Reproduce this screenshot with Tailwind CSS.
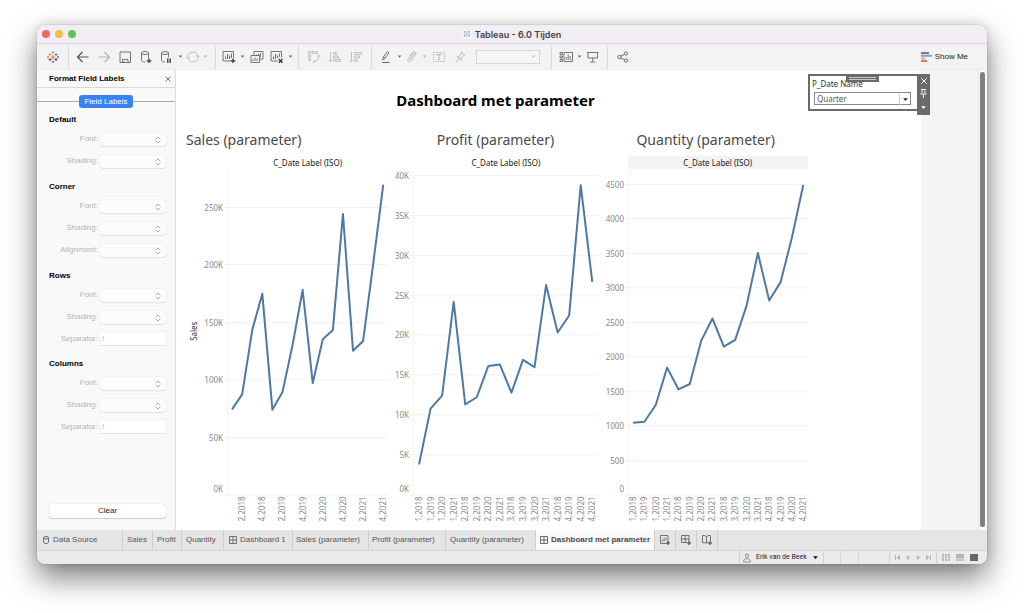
<!DOCTYPE html>
<html lang="en">
<head>
<meta charset="utf-8">
<meta name="viewport" content="width=device-width, initial-scale=1">
<title>Tableau - 6.0 Tijden</title>
<script src="https://cdn.jsdelivr.net/npm/@tailwindcss/browser@4"></script>
</head>
<body class="bg-white">

<!-- Shared icons -->
<svg class="hidden" aria-hidden="true">
  <symbol id="i-caret" viewBox="0 0 7 7"><path d="M1.700 2.500h3.600L3.500 4.700z" fill="currentColor"/></symbol>
  <symbol id="i-updown" viewBox="0 0 6 8"><path d="M1 3l2-2 2 2M1 5l2 2 2-2" fill="none" stroke="currentColor" stroke-width=".9" stroke-linecap="round" stroke-linejoin="round"/></symbol>
  <symbol id="i-grid" viewBox="0 0 8 8"><path d="M.5 .5h7v7h-7zM4 .5v7M.5 4h7" fill="none" stroke="currentColor" stroke-width=".8"/></symbol>
  <symbol id="i-logo" viewBox="0 0 14 14" fill="none" stroke-width=".9">
    <path d="M7 5v4M5 7h4" stroke="#e8762d" stroke-width="1.1"/>
    <path d="M4 3v3M2.500 4.500h3" stroke="#eb912c"/>
    <path d="M10 3v3M8.500 4.500h3" stroke="#59879b"/>
    <path d="M4 8v3M2.500 9.500h3" stroke="#c72035"/>
    <path d="M10 8v3M8.500 9.500h3" stroke="#1f447e"/>
    <path d="M7 1v2.500M5.800 2.200h2.400" stroke="#7199a6"/>
    <path d="M7 10.500V13M5.800 11.800h2.400" stroke="#5b6591"/>
    <path d="M2 5.900v2.200M1 7h2" stroke="#7199a6"/>
    <path d="M12 5.900v2.200M11 7h2" stroke="#5b6591"/>
  </symbol>
</svg>

<div class="flex min-h-screen flex-col pt-[25px] pr-[37px] pb-[49px] pl-[37px]">
<div class="flex flex-1 flex-col overflow-hidden rounded-lg bg-[#f4f4f4] font-['Liberation_Sans',Arial,sans-serif] text-[8px] leading-none text-[#3c3c3c] shadow-[0_0_1px_rgba(0,0,0,0.5),0_0_12px_rgba(0,0,0,0.12),0_14px_30px_rgba(0,0,0,0.5)]">

  <!-- Title bar -->
  <header class="grid h-[19px] shrink-0 grid-cols-[1fr_auto_1fr] items-center border-b border-[#dcd6dc] bg-[#f3edf5] px-[5px]">
    <div class="flex gap-[5px]">
      <button aria-label="Close" class="size-2 rounded-full bg-[#ed6a5e]"></button>
      <button aria-label="Minimize" class="size-2 rounded-full bg-[#f5bd4f]"></button>
      <button aria-label="Zoom" class="size-2 rounded-full bg-[#61c454]"></button>
    </div>
    <h1 class="flex items-center gap-1 font-[Inter,sans-serif] text-[9px] font-semibold text-[#444]">
      <svg class="size-2" viewBox="0 0 8 8"><path fill="#fff" d="M0 0h8v8H0z"/><path d="M4 .5v7M.5 4h7M1.800 1v2M6.200 1v2M1.800 5v2M6.200 5v2M1 2h1.600M5.400 2H7M1 6h1.600M5.400 6H7" stroke="#6f93bd" stroke-width=".8" stroke-dasharray="1.600 .5"/></svg>
      Tableau - 6.0 Tijden
    </h1>
    <span></span>
  </header>

  <!-- Toolbar -->
  <div role="toolbar" aria-label="Main" class="flex h-[26px] shrink-0 items-center border-b border-[#ebebeb] bg-[#f4f3f4] text-[#686868]">
    <div class="flex h-6 w-8 shrink-0 items-center justify-center border-r border-[#dcdcdc]">
      <button aria-label="Start page"><svg class="size-3.5"><use href="#i-logo"/></svg></button>
    </div>
    <div class="flex h-6 shrink-0 items-center border-r border-[#dcdcdc] pr-1 pl-[3px]">
      <button aria-label="Undo" class="flex w-[21px] justify-center"><svg class="size-3.5" viewBox="0 0 14 14" fill="none" stroke="#555" stroke-width="1.200"><path d="M12.500 7H1.500M6.500 2L1.500 7l5 5"/></svg></button>
      <button aria-label="Redo" class="flex w-[21px] justify-center text-[#b4b4b4]"><svg class="size-3.5" viewBox="0 0 14 14" fill="none" stroke="currentColor" stroke-width="1.200"><path d="M1.500 7h11M7.500 2l5 5-5 5"/></svg></button>
      <button aria-label="Save" class="flex w-[21px] justify-center"><svg class="size-3.5" viewBox="0 0 14 14" fill="none" stroke="currentColor" stroke-width=".9"><path d="M2 2h10.500v10.500H2zM4.500 12.500V9.500h5.500v3M6 12.500v-1.500"/></svg></button>
      <button aria-label="New data source" class="flex w-[21px] justify-center"><svg class="size-3.5" viewBox="0 0 14 14" fill="none" stroke="currentColor" stroke-width=".9"><ellipse cx="6" cy="3" rx="3.500" ry="1.500"/><path d="M2.500 3v7.500c0 .9 1.500 1.500 3.500 1.500M9.500 3v5"/><path d="M10 8.500v4.500M7.700 10.800h4.600" stroke="#333" stroke-width="1.300"/></svg></button>
      <button aria-label="Pause auto updates" class="flex w-[21px] justify-center"><svg class="size-3.5" viewBox="0 0 14 14" fill="none" stroke="currentColor" stroke-width=".9"><ellipse cx="5" cy="3" rx="3.500" ry="1.500"/><path d="M1.500 3v7.500c0 .9 1.500 1.500 3.500 1.500M8.500 3v4.500"/><path d="M7.800 8.500V13M10.200 8.500V13" stroke="#333" stroke-width="1.300"/></svg></button>
      <button aria-label="Pause options" class="w-[7px]"><svg class="size-[7px]"><use href="#i-caret"/></svg></button>
      <button aria-label="Run update" class="flex w-[18px] justify-center text-[#bcbcbc]"><svg class="size-3.5" viewBox="0 0 14 14" fill="none" stroke="currentColor" stroke-width="1"><path d="M2.200 8.500A5 5 0 0 1 11.300 4.500M11.800 5.500A5 5 0 0 1 2.700 9.500M1 7.300l1.300 1.500L4 7.500M10 6.500l1.800-1.300 1.200 1.600"/></svg></button>
      <button aria-label="Update options" class="mr-0.5 w-[7px] text-[#b0b0b0]"><svg class="size-[7px]"><use href="#i-caret"/></svg></button>
    </div>
    <div class="flex h-6 shrink-0 items-center border-r border-[#dcdcdc] pr-1 pl-[3px]">
      <button aria-label="New worksheet" class="flex w-5 justify-center"><svg class="size-3.5" viewBox="0 0 14 14" fill="none" stroke="currentColor" stroke-width=".9"><path d="M9 11H1V1.500h10.500V8"/><path d="M3.500 9V6.500M5.500 9V4M7.500 9V5.500M9.400 8V3.500" stroke-width="1"/><path d="M11 8.500V13M8.700 10.800h4.600" stroke="#333" stroke-width="1.300"/></svg></button>
      <button aria-label="New worksheet options" class="w-[7px]"><svg class="size-[7px]"><use href="#i-caret"/></svg></button>
      <button aria-label="Duplicate" class="flex w-[21px] justify-center"><svg class="size-3.5" viewBox="0 0 14 14" fill="none" stroke="currentColor" stroke-width=".9"><path d="M4 5V1.500h9v7.500H10M6.500 6V4.500M8.500 6V3.500M10.500 7V3"/><path d="M1 12.500V5.500h8.500v7zM3 11V9M5 11V7.500M7 11V8.500"/></svg></button>
      <button aria-label="Clear sheet" class="flex w-5 justify-center"><svg class="size-3.5" viewBox="0 0 14 14" fill="none" stroke="currentColor" stroke-width=".9"><path d="M8 11H1V1.500h10.500V7.500"/><path d="M3.500 9V6.500M5.500 9V4M7.500 8V5.500M9.400 7V3.500" stroke-width="1"/><path d="M8.800 9l3.700 3.700M12.500 9L8.800 12.700" stroke="#333" stroke-width="1.300"/></svg></button>
      <button aria-label="Clear options" class="w-[7px]"><svg class="size-[7px]"><use href="#i-caret"/></svg></button>
    </div>
    <div class="flex h-6 shrink-0 items-center border-r border-[#dcdcdc] pr-[5px] pl-1 text-[#b4b4b4]">
      <button aria-label="Swap rows and columns" class="flex w-[21px] justify-center"><svg class="size-3.5" viewBox="0 0 14 14" fill="none" stroke="currentColor" stroke-width=".8"><path d="M1.500 1.500h2v2h-2zM5 1.500h2v2H5zM8.500 1.500h2v2h-2zM1.500 5h2v2h-2zM1.500 8.500h2v2h-2z"/><path d="M11.500 5.500c.8 4-1.500 6-5 6M10 6.700l1.500-1.700 1.500 1.700M8 9.800l-1.700 1.700L8 13"/></svg></button>
      <button aria-label="Sort ascending" class="flex w-[21px] justify-center"><svg class="size-3.5" viewBox="0 0 14 14" fill="none" stroke="currentColor" stroke-width=".8"><path d="M2.500 2v9.500M1 10l1.500 1.700L4 10M5.500 2.500h3v1.800h-3zM5.500 6h5v1.800h-5zM5.500 9.500h7v1.800h-7z"/></svg></button>
      <button aria-label="Sort descending" class="flex w-[21px] justify-center"><svg class="size-3.5" viewBox="0 0 14 14" fill="none" stroke="currentColor" stroke-width=".8"><path d="M2.500 2v9.500M1 10l1.500 1.700L4 10M5.500 2.500h7v1.800h-7zM5.500 6h5v1.800h-5zM5.500 9.500h2.500v1.800H5.500z"/></svg></button>
    </div>
    <div class="flex h-6 shrink-0 items-center border-r border-[#dcdcdc] pr-[11px] pl-1 text-[#b4b4b4]">
      <button aria-label="Highlight" class="flex w-5 justify-center text-[#666]"><svg class="size-3.5" viewBox="0 0 14 14" fill="none" stroke="currentColor" stroke-width=".9"><path d="M3.500 10l.8-2.800 4-5.700 1.700 1.200-4 5.700zM4.300 7.200l1.700 1.200"/><path d="M3 12.500h7.500" stroke-width="1.200"/></svg></button>
      <button aria-label="Highlight options" class="w-[7px] text-[#666]"><svg class="size-[7px]"><use href="#i-caret"/></svg></button>
      <button aria-label="Group members" class="flex w-[18px] justify-center"><svg class="size-3.5" viewBox="0 0 14 14" fill="none" stroke="currentColor" stroke-width=".9"><path d="M5 9.500l4-5.200c.7-1-.5-2-1.300-1L3.300 9c-1.300 1.900 1 3.600 2.500 1.800l4.700-6.200c1.500-2.200-1.300-4.300-3-2.200L4.500 6.300"/></svg></button>
      <button aria-label="Group options" class="w-[7px]"><svg class="size-[7px]"><use href="#i-caret"/></svg></button>
      <button aria-label="Show mark labels" class="flex w-[21px] justify-center"><svg class="size-3.5" viewBox="0 0 14 14" fill="none" stroke="currentColor" stroke-width=".9"><path d="M1.500 2.500h11v9h-11z" stroke-dasharray="1.500 .8"/><path d="M4.500 5.500v-1h5v1M7 4.500v5M6 9.500h2"/></svg></button>
      <button aria-label="Fix axes" class="flex w-[21px] justify-center"><svg class="size-3.5" viewBox="0 0 14 14" fill="none" stroke="currentColor" stroke-width=".9"><path d="M8 2l3.700 3.200-1.300.4-2.200 2.400.3 2L4 6.300l2 .1 2.200-2.900zM6 8.200L2.800 12"/></svg></button>
      <select aria-label="Fit" disabled class="ml-1.5 h-[14px] w-16 appearance-none border border-[#d6d6d6] bg-[#f6f6f6] opacity-100"></select>
      <svg class="mr-[3px] -ml-2.5 size-[7px] text-[#c4c4c4]"><use href="#i-caret"/></svg>
    </div>
    <div class="flex h-6 shrink-0 items-center border-r border-[#dcdcdc] pr-1 pl-1">
      <button aria-label="Show or hide cards" class="flex w-5 justify-center"><svg class="size-3.5" viewBox="0 0 14 14" fill="none" stroke="currentColor" stroke-width=".9"><path d="M1 2.500h2.500v2H1zM1 6h2.500v2H1zM1 9.500h2.500v2H1zM5 2.500h8.500v9H5zM7.200 10V7M9.200 10V4.500M11.200 10V6"/></svg></button>
      <button aria-label="Card options" class="w-[7px]"><svg class="size-[7px]"><use href="#i-caret"/></svg></button>
      <button aria-label="Presentation mode" class="flex w-5 justify-center"><svg class="size-3.5" viewBox="0 0 14 14" fill="none" stroke="currentColor" stroke-width=".9"><path d="M1 2.500h11.500M2 2.500v5.500h9.500V2.500M6.700 8v3.500M4 12h5.500"/></svg></button>
    </div>
    <button aria-label="Share" class="ml-1 flex w-[21px] justify-center"><svg class="size-3.5" viewBox="0 0 14 14" fill="none" stroke="currentColor" stroke-width="1"><circle cx="3.500" cy="7" r="1.700"/><circle cx="10" cy="3.500" r="1.600"/><circle cx="10" cy="10.500" r="1.600"/><path d="M5 6.200l3.500-1.900M5 7.900l3.500 1.900"/></svg></button>
    <button class="mr-[19px] ml-auto flex items-center gap-[3px] text-[#222]">
      <svg class="h-2.5 w-[11px]" viewBox="0 0 11 10"><path fill="#8074a8" d="M0 0h8v2H0z"/><path fill="#7b9fce" d="M0 2.700h11v2H0z"/><path fill="#f1a76c" d="M0 5.400h4v2H0z"/><path fill="#ed6a73" d="M0 8h6v2H0z"/></svg>
      Show Me
    </button>
  </div>

  <main class="flex flex-1">
    <!-- Format pane -->
    <aside class="flex w-[139px] shrink-0 flex-col border-r border-[#dedede] bg-[#f9f9f9] text-[#b4b4b4]">
      <div class="flex h-[18px] items-center justify-between border-b border-[#d8d8d8] pr-1 pl-3">
        <h2 class="font-bold text-black">Format Field Labels</h2>
        <button aria-label="Close pane" class="text-[#666]"><svg class="size-1.5" viewBox="0 0 6 6"><path d="M.7.7l4.600 4.600M5.300.7L.7 5.300" stroke="currentColor" stroke-width=".9"/></svg></button>
      </div>
      <div class="mt-[7px] flex items-center">
        <span class="h-px flex-1 bg-[#a8a8a8]"></span>
        <button class="h-[13px] rounded-[3px] bg-[#3a83f7] px-[5px] text-white">Field Labels</button>
        <span class="h-px flex-1 bg-[#a8a8a8]"></span>
      </div>

      <div id="format-groups" class="mt-[3px] flex flex-col gap-1.5 pr-[9px] pl-3"></div>

      <button class="mt-auto mr-[9px] mb-3 ml-3 h-[14px] rounded-[3px] bg-white text-[#222] shadow-[0_0_1px_rgba(0,0,0,0.35),0_1px_1px_rgba(0,0,0,0.15)]">Clear</button>
    </aside>

    <!-- Dashboard -->
    <div class="relative flex flex-1 bg-[#f4f4f4] font-['Noto_Sans',sans-serif]">
      <div class="grid min-w-0 flex-1 grid-cols-[214fr_210fr_210fr_110fr] grid-rows-[57px_1fr] bg-white">
        <h2 class="col-span-3 flex items-center justify-center pt-1 pl-1 text-[15px] font-bold text-black">Dashboard met parameter</h2>
        <span></span>
        <section>
          <h3 class="flex h-7 items-center pb-0.5 pl-2.5 text-[14px] text-[#4a4a4a]">Sales (parameter)</h3>
          <p class="mt-px mr-0.5 mb-px ml-[51px] flex h-[13px] items-center justify-center text-[#222]">C_Date Label (ISO)</p>
          <svg id="chart-sales" class="w-full" viewBox="0 0 214 358" role="img" aria-label="Sales per quarter"></svg>
        </section>
        <section>
          <h3 class="flex h-7 items-center justify-center pb-0.5 text-[14px] text-[#4a4a4a]">Profit (parameter)</h3>
          <p class="mt-px mr-0.5 mb-px ml-[23px] flex h-[13px] items-center justify-center text-[#222]">C_Date Label (ISO)</p>
          <svg id="chart-profit" class="w-full" viewBox="0 0 210 358" role="img" aria-label="Profit per quarter"></svg>
        </section>
        <section>
          <h3 class="flex h-7 items-center justify-center pb-0.5 text-[14px] text-[#4a4a4a]">Quantity (parameter)</h3>
          <p class="mt-px mr-[3px] mb-px ml-[27px] flex h-[13px] items-center justify-center bg-[#f3f3f3] text-[#222]">C_Date Label (ISO)</p>
          <svg id="chart-quantity" class="w-full" viewBox="0 0 210 358" role="img" aria-label="Quantity per quarter"></svg>
        </section>
      </div>
      <div class="w-[57px] shrink-0"></div>

      <!-- Floating parameter control -->
      <div class="absolute top-1 right-12 flex items-start">
        <div class="relative h-[37px] w-[109px] border-2 border-r-0 border-[#6a6a6a] bg-white pt-1 pl-0.5">
          <label for="p-date" class="block h-3 text-[#333]">P_Date Name</label>
          <select id="p-date" class="ml-[2px] h-[13px] w-[97px] appearance-none border border-[#8a8a8a] bg-white pl-[2px] text-[#555]"><option>Quarter</option><option>Month</option><option>Year</option></select>
          <span class="pointer-events-none absolute right-[6px] bottom-1 flex h-[11px] w-3 items-center justify-center border-l border-[#ccc] text-[#222]"><svg class="size-[9px]"><use href="#i-caret"/></svg></span>
          <button aria-label="Move" class="absolute -top-0.5 left-9 flex h-2 w-[33px] flex-col items-center justify-center gap-px bg-[#6a6a6a]"><span class="h-px w-[27px] bg-[#c8c8c8]"></span><span class="h-px w-[27px] bg-[#c8c8c8]"></span></button>
        </div>
        <div class="flex h-[41px] w-[13px] flex-col items-center justify-between bg-[#6a6a6a] pt-1 pb-[3px] text-white">
          <button aria-label="Remove"><svg class="size-1.5" viewBox="0 0 6 6"><path d="M.3.3l5.400 5.400M5.700.3L.3 5.700" stroke="currentColor" stroke-width="1"/></svg></button>
          <button aria-label="Pin"><svg class="h-[9px] w-[7px]" viewBox="0 0 7 9" fill="none" stroke="currentColor" stroke-width=".9"><path d="M1 .5h5M2 .5v4M5 .5v4M.3 5h6.400M3.500 5v4"/></svg></button>
          <button aria-label="More options"><svg class="size-[9px]"><use href="#i-caret"/></svg></button>
        </div>
      </div>
    </div>
    <div class="flex w-[9px] shrink-0 justify-center border-l border-[#e4e4e4] bg-[#fafafa] pt-0.5 pr-px pb-[3px]"><span class="w-[5px] rounded-full bg-[#7f7f7f]"></span></div>
  </main>

  <!-- Sheet tabs -->
  <nav aria-label="Sheets" class="flex h-5 shrink-0 bg-[#e5e5e5] text-[#555]">
    <a href="#data" class="flex min-w-[86px] items-center gap-1 border-r border-[#cfcfcf] pl-1.5"><svg class="h-2 w-1.5" viewBox="0 0 6 8" fill="none" stroke="currentColor" stroke-width=".8"><ellipse cx="3" cy="1.700" rx="2.500" ry="1.200"/><path d="M.5 1.700v4.600c0 .7 1.100 1.200 2.500 1.200s2.500-.5 2.500-1.200V1.700"/></svg>Data Source</a>
    <a href="#sales" class="flex min-w-[30px] items-center border-r border-[#cfcfcf] pl-1">Sales</a>
    <a href="#profit" class="flex min-w-[29px] items-center border-r border-[#cfcfcf] pl-1">Profit</a>
    <a href="#quantity" class="flex min-w-[42px] items-center border-r border-[#cfcfcf] pl-1">Quantity</a>
    <a href="#dashboard-1" class="flex min-w-[69px] items-center gap-[3px] border-r border-[#cfcfcf] pl-[5px]"><svg class="size-2"><use href="#i-grid"/></svg>Dashboard 1</a>
    <a href="#sales-p" class="flex min-w-[76px] items-center border-r border-[#cfcfcf] pl-[3px]">Sales (parameter)</a>
    <a href="#profit-p" class="flex min-w-[77px] items-center border-r border-[#cfcfcf] pl-[3px]">Profit (parameter)</a>
    <a href="#quantity-p" class="flex min-w-[90px] items-center border-r border-[#cfcfcf] pl-1">Quantity (parameter)</a>
    <a href="#dashboard-p" aria-current="page" class="flex min-w-[119px] items-center gap-[3px] border-r border-[#cfcfcf] bg-[#fafafa] pl-1 font-bold text-[#4a4a4a]"><svg class="size-2"><use href="#i-grid"/></svg>Dashboard met parameter</a>
    <button aria-label="New worksheet tab" class="flex w-[21px] items-center justify-center border-r border-[#cfcfcf]"><svg class="size-2.5" viewBox="0 0 10 10" fill="none" stroke="currentColor" stroke-width=".8"><path d="M6 8.500H.5v-8h7.500V6M2.300 6.500V5M4 6.500V3M6 5.500V2.500"/><path d="M8 6v4M6 8h4" stroke="#444" stroke-width="1.100"/></svg></button>
    <button aria-label="New dashboard tab" class="flex w-[21px] items-center justify-center border-r border-[#cfcfcf]"><svg class="size-2.5" viewBox="0 0 10 10" fill="none" stroke="currentColor" stroke-width=".8"><path d="M6 7.500H.5v-7h7.500V6M4.200.5v7M.5 4h7.500"/><path d="M8 6v4M6 8h4" stroke="#444" stroke-width="1.100"/></svg></button>
    <button aria-label="New story tab" class="flex w-[21px] items-center justify-center border-r border-[#cfcfcf]"><svg class="size-2.5" viewBox="0 0 10 10" fill="none" stroke="currentColor" stroke-width=".8"><path d="M6 7.500L4.500 8 .5 7.500v-7L2.500.5 4.500 1.500l2-1h2V6M4.500 1.500V8"/><path d="M8 6v4M6 8h4" stroke="#444" stroke-width="1.100"/></svg></button>
  </nav>

  <!-- Status bar -->
  <footer class="flex h-[14px] shrink-0 justify-end border-t border-[#d2d2d2] bg-[#ebebeb]">
    <button class="flex w-[85px] items-center border-r border-l border-[#d0d0d0] pl-[3px] font-[Roboto,sans-serif] text-[7px] text-[#222]">
      <svg class="mr-[5px] h-2.5 w-2" viewBox="0 0 8 10" fill="none" stroke="#777" stroke-width=".8"><circle cx="4" cy="2.600" r="1.700"/><path d="M.6 9c0-2.500 1.200-3.400 3.400-3.400S7.400 6.500 7.400 9z"/></svg>
      Erik van de Beek
      <svg class="ml-1 size-[9px] text-black"><use href="#i-caret"/></svg>
    </button>
    <span class="w-[17px] border-r border-[#d8d8d8]"></span>
    <span class="w-[18px] border-r border-[#d8d8d8]"></span>
    <span class="w-[31px] border-r border-[#d0d0d0]"></span>
    <div class="flex w-[47px] items-center justify-evenly border-r border-[#d0d0d0] text-[#b3b3b3]">
      <button aria-label="First"><svg class="size-[5px]" viewBox="0 0 5 5" fill="currentColor"><path d="M0 0h1v5H0zM5 0v5L1.500 2.500z"/></svg></button>
      <button aria-label="Previous"><svg class="size-[5px]" viewBox="0 0 5 5" fill="currentColor"><path d="M4 0v5L1 2.500z"/></svg></button>
      <button aria-label="Next"><svg class="size-[5px]" viewBox="0 0 5 5" fill="currentColor"><path d="M1 0v5l3-2.500z"/></svg></button>
      <button aria-label="Last"><svg class="size-[5px]" viewBox="0 0 5 5" fill="currentColor"><path d="M4 0h1v5H4zM0 0v5l3.500-2.500z"/></svg></button>
    </div>
    <div class="flex w-[50px] items-center gap-1.5 pl-[5px]">
      <button aria-label="Show sheet sorter"><svg class="h-[7px] w-2" viewBox="0 0 8 7" fill="#b5b5b5"><path d="M0 0h2v2H0zM3 0h2v2H3zM6 0h2v2H6zM0 2.500h2v2H0zM3 2.500h2v2H3zM6 2.500h2v2H6zM0 5h2v2H0zM3 5h2v2H3zM6 5h2v2H6z"/></svg></button>
      <button aria-label="Show filmstrip"><svg class="h-[7px] w-2" viewBox="0 0 8 7" fill="#b5b5b5"><path d="M0 0h8v4.500H0zM0 5h2v2H0zM3 5h2v2H3zM6 5h2v2H6z"/></svg></button>
      <button aria-label="Show tabs"><svg class="h-[7px] w-2" viewBox="0 0 8 7"><path fill="#666" d="M0 0h8v7H0z"/></svg></button>
    </div>
  </footer>
</div>
</div>

<script>
// Format pane groups
const groups = [
  ["Default", ["Font", "Shading"]],
  ["Corner", ["Font", "Shading", "Alignment"]],
  ["Rows", ["Font", "Shading", "Separator"]],
  ["Columns", ["Font", "Shading", "Separator"]],
];
document.getElementById("format-groups").innerHTML = groups.map(([name, fields]) => `
  <fieldset>
    <legend class="flex h-[17px] items-center font-bold text-black">${name}</legend>
    ${fields.map((f) => {
      const id = (name + "-" + f).toLowerCase();
      return f === "Separator"
        ? `<div class="flex h-[21px] items-center justify-end gap-[2px]"><label for="${id}">${f}:</label><input id="${id}" value="/" disabled class="h-[13px] w-[66px] bg-white pl-[2px] text-[#aaa] shadow-[0_0_1px_rgba(0,0,0,0.2),0_1px_0_rgba(0,0,0,0.06)]"></div>`
        : `<div class="flex h-[22px] items-center justify-end gap-[2px]"><label for="${id}">${f}:</label><div class="relative flex"><select id="${id}" disabled class="h-[13px] w-[66px] appearance-none rounded-[3px] bg-[#fcfcfc] opacity-100 shadow-[0_0_1px_rgba(0,0,0,0.2),0_1px_1px_rgba(0,0,0,0.08)]"></select><svg class="pointer-events-none absolute top-[3px] right-[5px] h-2 w-1.5 text-[#a2a2a2]"><use href="#i-updown"/></svg></div></div>`;
    }).join("")}
  </fieldset>`).join("");

// Charts
const years = [2018, 2019, 2020, 2021], quarters = [1, 2, 3, 4];
const byYear = years.flatMap((y) => quarters.map((q) => q + "," + y));
const byQuarter = quarters.flatMap((q) => years.map((y) => q + "," + y));
const kilo = (v) => v + "K";
function chart(id, o) {
  const bottom = 324, step = (o.last - o.first) / 15;
  const y = (v) => bottom - v * o.scale;
  const x = (i) => o.first + i * step;
  let s = "";
  for (let v = 0; v <= o.max; v += o.tick) {
    const gy = Math.round(y(v)) + 0.5;
    s += `<path d="M${o.left - 3} ${gy}H${o.right}" class="stroke-[#f1f1f1]"/>`;
    s += `<text x="${o.left - 4}" y="${v === 0 ? 322 : gy + 3}" text-anchor="end" class="fill-[#888] text-[8px]">${o.format(v)}</text>`;
  }
  s += `<path d="M${o.left + 0.5} 0V${bottom}" class="stroke-[#f5f5f5]"/>`;
  o.labels.forEach((t, i) => {
    s += `<path d="M${x(i) - step / 2} ${bottom}v3" class="stroke-[#f1f1f1]"/>`;
    if (o.every === 1 || i % 2) s += `<text transform="translate(${x(i) + 3} ${bottom + 2}) rotate(-90)" text-anchor="end" class="fill-[#888] text-[8px]">${t}</text>`;
  });
  if (o.title) s += `<text transform="translate(21 161) rotate(-90)" text-anchor="middle" class="fill-[#333] text-[8px]">${o.title}</text>`;
  s += `<polyline points="${o.data.map((v, i) => x(i) + "," + y(v)).join(" ")}" class="fill-none stroke-[#4e79a7] stroke-2" stroke-linejoin="round"/>`;
  document.getElementById(id).innerHTML = s;
}
chart("chart-sales", { left: 51, right: 212, first: 56, last: 207, scale: 1.148, tick: 50, max: 250, every: 2, format: kilo, title: "Sales", labels: byYear,
  data: [74, 87, 143, 174.5, 73.7, 89, 130, 178, 97, 135, 143, 244, 125, 133.5, 200.5, 269.5] });
chart("chart-profit", { left: 23, right: 208, first: 29, last: 202, scale: 7.98, tick: 5, max: 40, every: 1, format: kilo, labels: byQuarter,
  data: [3.76, 10.74, 12.37, 24.1, 11.28, 12.16, 16.08, 16.25, 12.74, 16.84, 15.92, 26.2, 20.26, 22.4, 38.7, 26.6] });
chart("chart-quantity", { left: 27, right: 207, first: 32, last: 202, scale: 0.0689, tick: 500, max: 4500, every: 1, format: String, labels: byQuarter,
  data: [1039, 1054, 1296, 1838, 1524, 1601, 2225, 2549, 2142, 2240, 2733, 3498, 2810, 3077, 3725, 4485] });
</script>
</body>
</html>
